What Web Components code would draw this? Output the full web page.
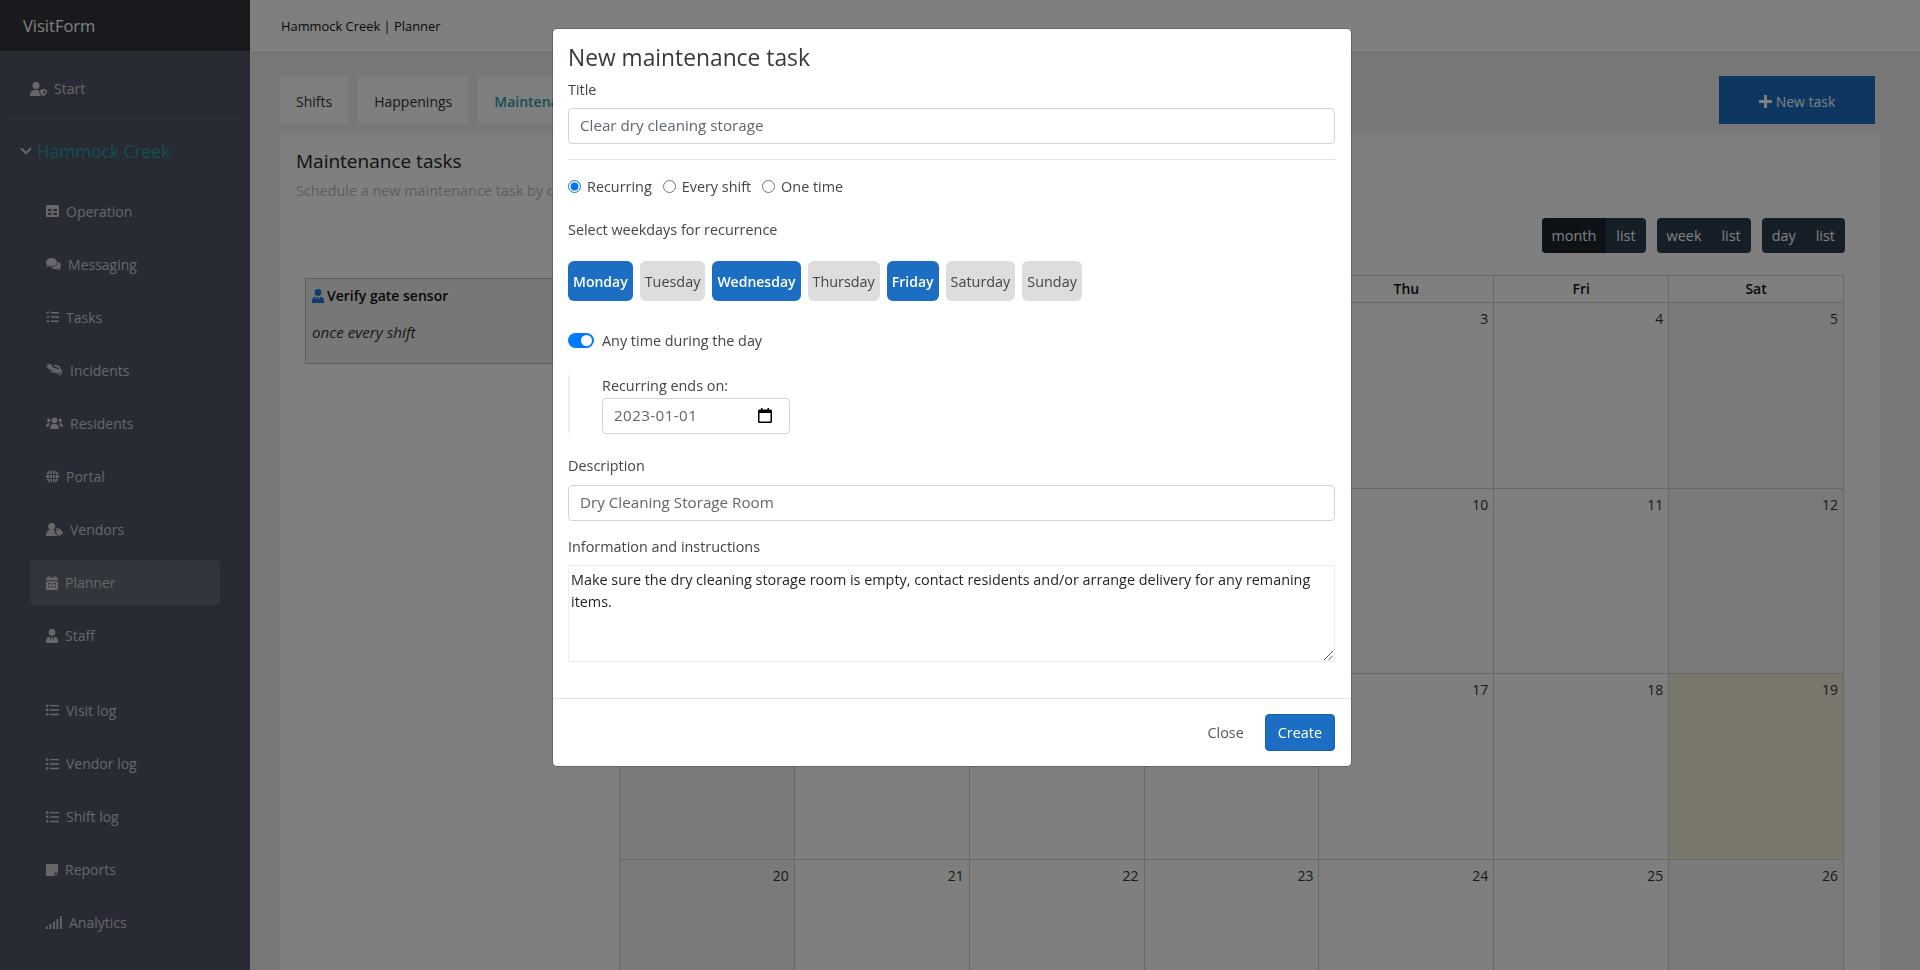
<!DOCTYPE html>
<html lang="en">
<head>
<meta charset="utf-8">
<title>VisitForm</title>
<style>
  html, body { margin: 0; height: 100%; overflow: hidden; }
  body { font: 14px/21px "Open Sans", "Liberation Sans", sans-serif; color: #212529; background: #f1f1f1; }
</style>
</head>
<body>
<vf-app>
  <vf-sidebar slot="side">
    <vf-nav-item slot="start" level="0" icon="user-shield">Start</vf-nav-item>
    <vf-site-head slot="site">Hammock Creek</vf-site-head>
    <vf-nav-item icon="table">Operation</vf-nav-item>
    <vf-nav-item icon="comments">Messaging</vf-nav-item>
    <vf-nav-item icon="tasks">Tasks</vf-nav-item>
    <vf-nav-item icon="car-crash">Incidents</vf-nav-item>
    <vf-nav-item icon="users">Residents</vf-nav-item>
    <vf-nav-item icon="globe">Portal</vf-nav-item>
    <vf-nav-item icon="user-tag">Vendors</vf-nav-item>
    <vf-nav-item icon="calendar" active>Planner</vf-nav-item>
    <vf-nav-item icon="user-tie">Staff</vf-nav-item>
    <vf-nav-item slot="logs" icon="list">Visit log</vf-nav-item>
    <vf-nav-item slot="logs" icon="list">Vendor log</vf-nav-item>
    <vf-nav-item slot="logs" icon="list">Shift log</vf-nav-item>
    <vf-nav-item slot="logs" icon="note">Reports</vf-nav-item>
    <vf-nav-item slot="logs" icon="signal">Analytics</vf-nav-item>
  </vf-sidebar>
  <vf-topbar slot="top">Hammock Creek | Planner</vf-topbar>
  <vf-tabs slot="main"></vf-tabs>
  <vf-panel slot="main"></vf-panel>
</vf-app>
<vf-modal heading="New maintenance task">
  <vf-task-form></vf-task-form>
</vf-modal>

<script>
const ICONS = {
  "user-shield": [17, 14, `<circle cx="6" cy="3.5" r="3.5"/><path d="M0 14v-1.4A4.6 4.6 0 0 1 4.6 8h2.8c.7 0 1.3.2 1.9.5v1c0 1.800.6 3.400 2 4.500z"/><path fill-rule="evenodd" d="M13.500 6.800 17 8.200c0 3-1 5-3.500 5.800-2.500-.8-3.500-2.800-3.500-5.800zm0 1.500v4.200c1.300-.6 2-1.700 2.100-3.400z"/>`],
  "table": [13, 12, `<path fill-rule="evenodd" d="M1 0h11a1 1 0 0 1 1 1v10a1 1 0 0 1-1 1H1a1 1 0 0 1-1-1V1a1 1 0 0 1 1-1zM2 4v2.300h3.500V4zM7.500 4v2.300H11V4zM2 8v2h3.500V8zM7.500 8v2H11V8z"/>`],
  "comments": [15, 12, `<path d="M5.500 0c3 0 5.500 1.900 5.500 4.200s-2.500 4.200-5.500 4.200c-.8 0-1.500-.1-2.200-.4-.8.6-1.900 1-3.300 1 .6-.5 1.200-1.200 1.400-2C.6 6.200 0 5.300 0 4.200 0 1.900 2.500 0 5.500 0z"/><path d="M11.800 3.600c1.900.7 3.200 2.200 3.200 3.900 0 1.100-.5 2-1.300 2.800.3.7.8 1.300 1.300 1.700-1.200 0-2.300-.4-3.200-1-.6.2-1.300.3-2 .3-1.900 0-3.600-.8-4.600-2 3.600-.1 6.800-2.400 6.600-5.700z"/>`],
  "tasks": [13, 12, `<path d="M5 1h8v1.500H5zM5 5.300h8v1.500H5zM5 9.600h8v1.500H5z"/><circle cx="2" cy="10.300" r="1.200"/><path d="M.5 1.500l1 1L3.300.4M.5 5.800l1 1 1.800-2.100" fill="none" stroke="currentColor" stroke-width="1.100"/>`],
  "car-crash": [17, 14, `<path d="M3.500 0l.7 1.700L6 1.300l-.6 1.800L6.800 4.300 5 4.700l-.1 1.800-1.400-1.200L2 6.500l-.1-1.800L0 4.300l1.500-1.200L.9 1.300l1.900.4z"/><path fill-rule="evenodd" d="M8.800 1.800l3.600 1c1 .3 1.700 1 2 2l.6 1.400c.9.600 1.400 1.700 1.100 2.800l-.6 2.100-1 .1-.3 1-1.800-.5.3-1-6.200-1.700-.3 1-1.800-.5.3-1-.8-.7.6-2.100c.3-1.100 1.200-1.800 2.300-1.900l1-1.300c.6-.7 1.500-1 2.400-.7zm-.4 1.500c-.4-.1-.8 0-1 .3l-.8 1 6.600 1.800-.4-1.200c-.1-.4-.4-.7-.8-.8zM6 6.900c-.5-.1-1 .1-1.100.6-.1.5.1 1 .6 1.100.5.1 1-.1 1.100-.6.1-.5-.1-1-.6-1.100zm7.500 2c-.5-.1-1 .1-1.100.6-.1.500.1 1 .6 1.100.5.1 1-.1 1.100-.6.1-.5-.1-1-.6-1.100z"/>`],
  "users": [17, 12, `<circle cx="8.500" cy="3.300" r="2.900"/><circle cx="2.800" cy="3.400" r="1.800"/><circle cx="14.200" cy="3.400" r="1.800"/><path d="M4.300 12v-1.700C4.300 8.400 5.800 7 7.500 7h2c1.700 0 3.200 1.400 3.200 3.300V12zM0 9.200C0 7.700 .9 6.200 2.600 6.200c.7 0 1.200.2 1.700.6-1 .8-1.500 1.700-1.700 3H0zM17 9.200c0-1.500-.9-3-2.600-3-.7 0-1.200.2-1.700.6 1 .8 1.500 1.700 1.700 3H17z"/>`],
  "globe": [13, 13, `<circle cx="6.500" cy="6.500" r="6.500"/><g fill="none" stroke="#505666" stroke-width=".9"><ellipse cx="6.500" cy="6.500" rx="3" ry="6.500"/><path d="M6.500 0v13M0 4.500h13M0 8.500h13"/></g>`],
  "user-tag": [17, 13, `<circle cx="5.700" cy="3.500" r="3.500"/><path d="M0 13v-1.400A4.600 4.600 0 0 1 4.600 7h2.200c.8 0 1.500.2 2.100.5v1.800c0 .6.2 1.200.7 1.600L12 13z"/><path fill-rule="evenodd" d="M10 7h3c.3 0 .6.100.8.300l2.900 2.900c.4.400.4 1 0 1.400L14.200 14c-.4.400-1 .4-1.400 0l-2.500-2.500c-.2-.2-.3-.5-.3-.8zm1.500 1a.8.800 0 1 0 0 1.600.8.800 0 0 0 0-1.600z" transform="translate(0 -1.400)"/>`],
  "calendar": [12, 14, `<path fill-rule="evenodd" d="M2.500 0h1.200v1.500h4.600V0h1.200v1.500h1.200C11.500 1.500 12 2 12 2.700v1.500H0V2.700c0-.7.500-1.200 1.300-1.200h1.200zM0 5.200h12v7.500c0 .7-.5 1.300-1.300 1.300H1.300C.5 14 0 13.400 0 12.700zM2 7v1.500h1.700V7zm3.200 0v1.500h1.600V7zm3.100 0v1.500H10V7zM2 10v1.500h1.700V10zm3.200 0v1.500h1.600V10zm3.100 0v1.500H10V10z"/>`],
  "user-tie": [12, 14, `<circle cx="6" cy="3.400" r="3.400"/><path d="M0 14v-2.400C0 9.500 1.300 8 3.300 7.700L5 11l.3-2.200L4.800 8h2.400l-.5.800L7 11l1.700-3.300c2 .3 3.300 1.800 3.300 3.900V14H0z"/>`],
  "list": [13, 12, `<path d="M0 .4h2.400v2.300H0zM0 4.800h2.400v2.300H0zM0 9.300h2.400v2.300H0zM4 .9h9v1.400H4zM4 5.300h9v1.400H4zM4 9.800h9v1.400H4z"/>`],
  "note": [12, 12, `<path d="M1 0h10a1 1 0 0 1 1 1v7.500H9a.5.5 0 0 0-.5.500v3H1a1 1 0 0 1-1-1V1a1 1 0 0 1 1-1zM9.500 9.500H12L9.500 12z"/>`],
  "signal": [16, 13, `<path d="M0 10.500h1.800V13H0zM3.500 8h1.800v5H3.500zM7 5.500h1.800V13H7zM10.500 3h1.800v10h-1.800zM14 0h1.800v13H14z"/>`],
  "chevron": [12, 8, `<path d="M1 1.200l5 5 5-5" fill="none" stroke="currentColor" stroke-width="2"/>`],
  "plus": [13, 13, `<path d="M5 0h3v5h5v3H8v5H5V8H0V5h5z"/>`]
};

class VfIcon extends HTMLElement {
  connectedCallback(){
    const [w, h, body] = ICONS[this.getAttribute("name")];
    this.attachShadow({mode:"open"}).innerHTML = `
      <style>:host{ display:inline-flex; flex:none; } svg{ display:block; fill:currentColor; }</style>
      <svg width="${w}" height="${h}" viewBox="0 0 ${w} ${h}" aria-hidden="true">${body}</svg>`;
  }
}
customElements.define("vf-icon", VfIcon);

class VfApp extends HTMLElement {
  constructor(){
    super();
    this.attachShadow({mode:"open"}).innerHTML = `
      <style>
        :host{ display:grid; grid-template-columns:250px 1fr; height:100vh; overflow:hidden; }
        .right{ display:flex; flex-direction:column; min-width:0; overflow:hidden; }
        .content{ padding:23px 40px 0 30px; display:flex; flex-direction:column; gap:11px; }
      </style>
      <slot name="side"></slot>
      <div class="right">
        <slot name="top"></slot>
        <div class="content"><slot name="main"></slot></div>
      </div>`;
  }
}
customElements.define("vf-app", VfApp);

class VfSidebar extends HTMLElement {
  constructor(){
    super();
    this.attachShadow({mode:"open"}).innerHTML = `
      <style>
        :host{ display:block; background:#505666; height:100vh; overflow:hidden; }
        .brand{ height:51px; padding-left:23px; display:flex; align-items:center; background:#30343c; color:#fff; font-size:16.500px; }
        nav{ padding-top:11px; }
        hr{ border:0; border-top:1px solid #5d6373; margin:4px 10px 0; }
        .logs{ margin-top:21.600px; }
      </style>
      <div class="brand">VisitForm</div>
      <nav>
        <slot name="start"></slot>
        <hr>
        <slot name="site"></slot>
        <slot></slot>
        <div class="logs"><slot name="logs"></slot></div>
      </nav>`;
  }
}
customElements.define("vf-sidebar", VfSidebar);

class VfNavItem extends HTMLElement {
  connectedCallback(){
    const root = this.attachShadow({mode:"open"});
    const top = this.getAttribute("level") === "0";
    root.innerHTML = `
      <style>
        :host{ display:flex; align-items:center; height:53.100px; color:#cfcfcf; }
        a{ display:flex; align-items:center; gap:7px; width:190px; height:45px; box-sizing:border-box;
           margin-left:30px; padding-left:${top ? 0 : 16}px; border-radius:5px; }
        :host([active]) a{ background:rgba(255,255,255,.12); }
      </style>
      <a><vf-icon name="${this.getAttribute("icon")}"></vf-icon><slot></slot></a>`;
  }
}
customElements.define("vf-nav-item", VfNavItem);

class VfSiteHead extends HTMLElement {
  constructor(){
    super();
    this.attachShadow({mode:"open"}).innerHTML = `
      <style>
        :host{ display:flex; align-items:center; gap:5px; height:62px; margin-bottom:2.400px; padding-left:20px; color:#cfcfcf; }
        span{ color:#1f9eae; font-size:17.300px; }
      </style>
      <vf-icon name="chevron"></vf-icon><span><slot></slot></span>`;
  }
}
customElements.define("vf-site-head", VfSiteHead);

class VfTopbar extends HTMLElement {
  constructor(){
    super();
    this.attachShadow({mode:"open"}).innerHTML = `
      <style>
        :host{ display:flex; align-items:center; flex:none; height:52px; padding-left:31px; background:#fff;
               border-bottom:1px solid #dcdcdc; font-size:12.900px; color:#111; }
      </style>
      <slot></slot>`;
  }
}
customElements.define("vf-topbar", VfTopbar);

class VfTabs extends HTMLElement {
  constructor(){
    super();
    this.attachShadow({mode:"open"}).innerHTML = `
      <style>
        :host{ display:flex; gap:10px; height:48px; padding-right:5px; }
        .tab{ display:flex; align-items:center; padding:2px 16px 0; background:#fff; color:#333; box-sizing:border-box; }
        .active{ color:#1f9eae; font-weight:600; }
        .add{ margin-left:auto; width:156px; padding-top:2px; box-sizing:border-box; display:flex; align-items:center; justify-content:center; gap:4px;
              background:#1b6ec2; color:#fff; }
      </style>
      <div class="tab">Shifts</div>
      <div class="tab">Happenings</div>
      <div class="tab active">Maintenance</div>
      <div class="add"><vf-icon name="plus"></vf-icon>New task</div>`;
  }
}
customElements.define("vf-tabs", VfTabs);

class VfPanel extends HTMLElement {
  constructor(){
    super();
    this.attachShadow({mode:"open"}).innerHTML = `
      <style>
        :host{ display:block; background:#fff; }
        header{ padding:13px 16px 0; height:83px; box-sizing:border-box; }
        h2{ margin:0; font-size:19px; line-height:27px; font-weight:400; color:#222; }
        p{ margin:5px 0 0; color:#bbb; font-size:14.400px; }
        .row{ display:flex; }
        .side{ width:339px; flex:none; padding:60px 0 0 25px; box-sizing:border-box; }
        vf-calendar{ width:1225px; }
      </style>
      <header>
        <h2>Maintenance tasks</h2>
        <p>Schedule a new maintenance task by c</p>
      </header>
      <div class="row">
        <div class="side"><vf-task-chip></vf-task-chip></div>
        <vf-calendar></vf-calendar>
      </div>`;
  }
}
customElements.define("vf-panel", VfPanel);

class VfTaskChip extends HTMLElement {
  constructor(){
    super();
    this.attachShadow({mode:"open"}).innerHTML = `
      <style>
        :host{ display:block; height:86px; width:280px; box-sizing:border-box; border:1px solid #bbb; background:#eee; padding:6px 6px; }
        .t{ display:flex; align-items:center; gap:3px; font-weight:600; color:#111; }
        vf-icon{ color:#1b77dd; }
        em{ display:block; margin-top:16px; color:#333; font-size:15.200px; }
      </style>
      <div class="t"><vf-icon name="user-tie"></vf-icon>Verify gate sensor</div>
      <em>once every shift</em>`;
  }
}
customElements.define("vf-task-chip", VfTaskChip);

class VfCalendar extends HTMLElement {
  constructor(){
    super();
    // columns under the dialog stay without labels, only what shows is written
    const days = ["","","","","Thu","Fri","Sat"];
    const dates = ["","","","",3,4,5, "","","","",10,11,12, "","","","",17,18,19, 20,21,22,23,24,25,26];
    const groups = [["month","list"],["week","list"],["day","list"]];
    this.attachShadow({mode:"open"}).innerHTML = `
      <style>
        :host{ display:block; }
        .bar{ display:flex; justify-content:flex-end; gap:11px; height:35px; margin-bottom:22px; margin-right:-1px; font-size:14.400px; }
        .grp{ display:flex; border-radius:4px; overflow:hidden; background:#2c3e50; color:#fff; }
        .grp span{ padding:0 10px; line-height:35px; }
        .grp .on{ background:#1a252f; }
        .grid{ display:grid; grid-template-columns:repeat(7,1fr); border-left:1px solid #d0d0d0; border-top:1px solid #d0d0d0; }
        .h{ height:26px; line-height:26px; text-align:center; font-weight:600; color:#111; border-right:1px solid #d0d0d0; border-bottom:1px solid #d0d0d0; }
        .c{ padding:5px 5px 0 0; height:179.600px; text-align:right; color:#333;
            border-right:1px solid #d0d0d0; border-bottom:1px solid #d0d0d0; }
        .we{ background:#f5f5f5; }
        .today{ background:#f5efd9; }
      </style>
      <div class="bar">
        ${groups.map((g,i) => `<div class="grp">${g.map((t,j) => `<span class="${i===0&&j===0?"on":""}">${t}</span>`).join("")}</div>`).join("")}
      </div>
      <div class="grid">
        ${days.map(d => `<div class="h">${d}</div>`).join("")}
        ${dates.map((d,i) => `<div class="c ${d===19?"today":(i%7===0||i%7===6?"we":"")}">${d}</div>`).join("")}
      </div>`;
  }
}
customElements.define("vf-calendar", VfCalendar);

class VfModal extends HTMLElement {
  connectedCallback(){
    this.attachShadow({mode:"open"}).innerHTML = `
      <style>
        :host{ position:fixed; inset:0; display:flex; justify-content:center; align-items:flex-start;
               background:rgba(0,0,0,.5); padding:28px 16px 0 0; }
        .dialog{ width:798px; border:1px solid rgba(0,0,0,.2); border-radius:5px; background:#fff; background-clip:padding-box; }
        h5{ margin:0; padding:15px 15px 0; font-size:22.800px; line-height:27px; font-weight:400; color:#343a40; }
      </style>
      <div class="dialog">
        <h5>${this.getAttribute("heading")}</h5>
        <slot></slot>
      </div>`;
  }
}
customElements.define("vf-modal", VfModal);

class VfInput extends HTMLElement {
  constructor(){
    super();
    this.attachShadow({mode:"open"}).innerHTML = `
      <style>
        :host{ display:flex; align-items:center; height:36px; box-sizing:border-box; padding:0 12px 0 11px;
               border:1px solid #ced4da; border-radius:4px; color:#5f666d; background:#fff; font-size:15.200px; }
      </style>
      <slot></slot>`;
  }
}
customElements.define("vf-input", VfInput);

class VfDay extends HTMLElement {
  constructor(){
    super();
    this.attachShadow({mode:"open"}).innerHTML = `
      <style>
        :host{ display:flex; align-items:center; height:40px; padding:0 5px; border-radius:6px; background:#ddd; color:#444; font-size:14.400px; }
        :host([on]){ background:#1b6ec2; color:#fff; font-weight:600; font-size:14px; }
      </style>
      <slot></slot>`;
  }
}
customElements.define("vf-day", VfDay);

class VfRadio extends HTMLElement {
  constructor(){
    super();
    this.attachShadow({mode:"open"}).innerHTML = `
      <style>
        :host{ display:inline-flex; align-items:center; gap:6px; color:#444; }
        input{ margin:0; width:13px; height:13px; }
      </style>
      <input type="radio" name="kind"><slot></slot>`;
    if (this.hasAttribute("checked")) this.shadowRoot.querySelector("input").checked = true;
  }
}
customElements.define("vf-radio", VfRadio);

class VfTaskForm extends HTMLElement {
  constructor(){
    super();
    this.attachShadow({mode:"open"}).innerHTML = `
      <style>
        :host{ display:block; color:#444; font-size:14.400px; }
        .body{ padding:8px 16px 36px 15px; }
        label{ display:block; }
        hr{ border:0; border-top:1px solid #e3e3e3; margin:15px 0 16.500px; }
        .radios{ display:flex; gap:11px; }
        .days{ display:flex; gap:7px; margin-top:21.500px; }
        .pick{ margin-top:21.500px; }
        .switch{ display:flex; align-items:center; gap:8px; margin-top:29px; }
        .track{ display:flex; align-items:center; justify-content:flex-end; width:26px; height:15px; padding-right:2px; box-sizing:border-box;
                border-radius:8px; background:#007bff; }
        .knob{ width:11px; height:11px; border-radius:50%; background:#fff; }
        .ends{ margin-top:24.500px; padding-left:32px; border-left:2px solid #eee; height:58px; }
        .ends label{ margin-top:-.500px; line-height:21px; }
        .ends vf-input{ width:188px; margin-top:1.500px; justify-content:space-between; letter-spacing:.4px; }
        .ends svg{ display:block; margin-right:5px; }
        .desc{ margin-top:21.500px; }
        .info{ margin-top:15px; }
        .first + vf-input{ margin-top:7.500px; }
        .desc + vf-input{ margin-top:9px; }
        .area{ position:relative; height:97px; margin-top:8px; box-sizing:border-box; padding:3px 2px; border:1px solid #eee; color:#212529; line-height:22.500px; }
        .area svg{ position:absolute; right:1px; bottom:1px; }
        footer{ display:flex; justify-content:flex-end; align-items:center; gap:21px; height:67.500px; padding:0 16px 0 15px; border-top:1px solid #dee2e6; }
        .close{ color:#555; }
        .create{ display:flex; align-items:center; height:37px; padding:0 12px; border:1px solid #1861ac; border-radius:4px; background:#1b6ec2; color:#fff; box-sizing:border-box; }
      </style>
      <div class="body">
        <label class="first">Title</label>
        <vf-input>Clear dry cleaning storage</vf-input>
        <hr>
        <div class="radios">
          <vf-radio checked>Recurring</vf-radio>
          <vf-radio>Every shift</vf-radio>
          <vf-radio>One time</vf-radio>
        </div>
        <label class="pick">Select weekdays for recurrence</label>
        <div class="days">
          <vf-day on>Monday</vf-day><vf-day>Tuesday</vf-day><vf-day on>Wednesday</vf-day><vf-day>Thursday</vf-day><vf-day on>Friday</vf-day><vf-day>Saturday</vf-day><vf-day>Sunday</vf-day>
        </div>
        <div class="switch"><span class="track"><span class="knob"></span></span>Any time during the day</div>
        <div class="ends">
          <label>Recurring ends on:</label>
          <vf-input>2023-01-01
            <svg width="14" height="15" viewBox="0 0 14 15"><path fill="#000" fill-rule="evenodd" d="M3 0h1.500v1.500h5V0H11v1.500h1.500c.8 0 1.500.7 1.500 1.500v10.500c0 .8-.7 1.500-1.500 1.500h-11C.7 15 0 14.300 0 13.500V3c0-.8.7-1.500 1.500-1.500H3zM1.500 5v8.500h11V5z"/></svg>
          </vf-input>
        </div>
        <label class="desc">Description</label>
        <vf-input>Dry Cleaning Storage Room</vf-input>
        <label class="info">Information and instructions</label>
        <div class="area">Make sure the dry cleaning storage room is empty, contact residents and/or arrange delivery for any remaning items.
          <svg width="9" height="9" viewBox="0 0 9 9"><path d="M0 9L9 0M4.500 9L9 4.500" stroke="#555" stroke-width="1" fill="none"/></svg>
        </div>
      </div>
      <footer>
        <span class="close">Close</span>
        <span class="create">Create</span>
      </footer>`;
  }
}
customElements.define("vf-task-form", VfTaskForm);
</script>
</body>
</html>
